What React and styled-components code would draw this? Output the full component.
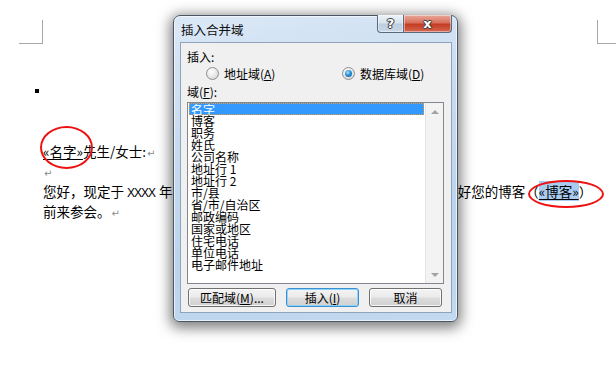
import React from "react"
import styled, {createGlobalStyle} from "styled-components"

const GlobalStyle = createGlobalStyle`
    html, body {
        margin: 0;
        padding: 0;
        background: #ffffff;
    }
    body {
        font-family: "Noto Sans CJK SC", "Liberation Sans", sans-serif;
        color: #000;
    }
`

const Page = styled.div`
    position: relative;
    width: 616px;
    height: 368px;
    overflow: hidden;
    background: #ffffff;
`
const CornerRow = styled.div`
    display: flex;
    justify-content: space-between;
    padding-top: 20px;
`
const Corner = styled.div`
    width: ${p => p.right ? "18px" : "23px"};
    height: 23px;
    margin-left: ${p => p.right ? "0px" : "19px"};
    border-bottom: 1px solid #a8a8a8;
    border-${p => p.right ? "left" : "right"}: 1px solid #a8a8a8;
`
const Body = styled.div`
    display: flex;
    flex-direction: column;
    padding-left: 43px;
    font-size: 13.5px;
    line-height: 20px;
`
const Bullet = styled.div`
    width: 4px;
    height: 4px;
    margin: 45px 0 48px -8px;
    background: #000;
`
const Line = styled.div`
    white-space: nowrap;
    height: 20px;
`
const Field = styled.span`
    text-decoration: underline;
    text-underline-offset: 2px;
    background: ${p => p.selected ? "#a9cdf2" : "transparent"};
`
const Latin = styled.span`
    font-family: "Liberation Sans", sans-serif;
    font-size: 12px;
    letter-spacing: -1px;
    margin-right: 1px;
`
const Mark = styled.span`
    font-family: "DejaVu Sans", sans-serif;
    font-size: 10px;
    color: #8a8a8a;
    margin-left: 1px;
`
const Ring = styled.div`
    position: absolute;
    left: ${p => p.x}px;
    top: ${p => p.y}px;
    width: ${p => p.w}px;
    height: ${p => p.h}px;
    box-sizing: border-box;
    border: 2px solid #ee1111;
    border-radius: 50%;
`

/* dialog window */
const Dialog = styled.div`
    position: absolute;
    left: 173px;
    top: 15px;
    width: 285px;
    height: 307px;
    box-sizing: border-box;
    display: flex;
    flex-direction: column;
    border: 1px solid #4b5563;
    border-radius: 7px 7px 6px 6px;
    background: linear-gradient(170deg, #dbe8f6 0%, #c7dbf0 35%, #bbd4ed 70%, #c2d9ef 100%);
    box-shadow: inset 0 0 0 1px rgba(255,255,255,0.65), 0 3px 13px 3px rgba(0,0,0,0.5);
    font-size: 12px;
    line-height: 13px;
`
const TitleBar = styled.div`
    display: flex;
    align-items: flex-start;
    height: 26px;
    padding: 0 5px 0 7px;
`
const Title = styled.div`
    flex: 1;
    padding-top: 7px;
    font-size: 12.5px;
    color: #111;
`
const CaptionButton = styled.div`
    display: flex;
    align-items: center;
    justify-content: center;
    width: ${p => p.close ? "48px" : "27px"};
    height: 18px;
    margin-top: -1px;
    box-sizing: border-box;
    border: 1px solid #5a6a7e;
    border-top: none;
    border-left: ${p => p.close ? "none" : "1px solid #5a6a7e"};
    border-radius: ${p => p.close ? "0 0 4px 0" : "0 0 0 4px"};
    background: ${p => p.close
        ? "linear-gradient(180deg, #e9a99b 0%, #d9715c 45%, #c43c24 55%, #d5674f 100%)"
        : "linear-gradient(180deg, #eef3f9 0%, #d7e2ee 45%, #bdcddf 55%, #c9d8e8 100%)"};
    box-shadow: inset 0 0 0 1px rgba(255,255,255,0.45);
    color: #fff;
    font-family: "DejaVu Sans", sans-serif;
    font-weight: bold;
    font-size: 13px;
    text-shadow: 0 0 1px #333, 0 0 1px #333, 1px 0 0 #444, -1px 0 0 #444, 0 1px 0 #444, 0 -1px 0 #444;
`
const Client = styled.div`
    flex: 1;
    margin: 0 5px 8px 6px;
    border: 1px solid #8ea4bd;
    background: #f0f0f0;
    padding: 7px 6px 0 6px;
    display: flex;
    flex-direction: column;
`
const Label = styled.div`
    height: 13px;
    margin-top: ${p => p.gap || 0}px;
`
const RadioRow = styled.div`
    display: grid;
    grid-template-columns: 136px 1fr;
    align-items: center;
    height: 20px;
    padding-left: 19px;
`
const RadioItem = styled.div`
    display: flex;
    align-items: center;
    gap: 5px;
`
const RadioDot = styled.span`
    position: relative;
    width: 11px;
    height: 11px;
    border-radius: 50%;
    border: 1px solid #8e8f8f;
    background: radial-gradient(circle at 40% 35%, #ffffff 0%, #e6e6e6 55%, #c9c9c9 100%);

    &::after {
        content: "";
        display: ${p => p.checked ? "block" : "none"};
        position: absolute;
        left: 2px;
        top: 2px;
        width: 7px;
        height: 7px;
        border-radius: 50%;
        background: radial-gradient(circle at 40% 35%, #a9e4ff 0%, #2d8fd7 45%, #0d4f8c 100%);
    }
`
const Mn = styled.u`
    text-underline-offset: 1px;
`
const List = styled.div`
    display: flex;
    height: 182px;
    margin-top: 4px;
    margin-right: 1px;
    box-sizing: border-box;
    border: 1px solid #828790;
    background: #ffffff;
`
const Items = styled.div`
    flex: 1;
`
const Item = styled.div`
    height: 12px;
    line-height: 12px;
    font-size: 12px;
    padding-left: 1px;
    margin: 0 1px;
    box-sizing: border-box;
    border: 1px dotted ${p => p.active ? "#e79a3c" : "transparent"};
    border-width: ${p => p.active ? "1px" : "0 1px"};
    background: ${p => p.active ? "#3399ff" : "transparent"};
    color: ${p => p.active ? "#ffffff" : "#000000"};
    white-space: nowrap;
`
const ScrollBar = styled.div`
    width: 17px;
    display: flex;
    flex-direction: column;
    justify-content: space-between;
    background: #f3f3f3;
    border-left: 1px solid #e4e4e4;
`
const Arrow = styled.div`
    height: 17px;
    display: flex;
    align-items: center;
    justify-content: center;

    &::before {
        content: "";
        border-left: 4px solid transparent;
        border-right: 4px solid transparent;
        ${p => p.down ? "border-top" : "border-bottom"}: 4px solid #a3a3a3;
    }
`
const ButtonRow = styled.div`
    display: grid;
    grid-template-columns: 88px 73px 73px;
    column-gap: 10px;
    margin-top: 4px;
    padding-left: 1px;
`
const Button = styled.div`
    height: 19px;
    box-sizing: border-box;
    display: flex;
    align-items: center;
    justify-content: center;
    border: 1px solid ${p => p.primary ? "#3c8fd0" : "#707070"};
    border-radius: 3px;
    background: linear-gradient(180deg, #f3f3f3 0%, #ebebeb 48%, #dddddd 52%, #d0d0d0 100%);
    box-shadow: inset 0 0 0 1px ${p => p.primary ? "#8fd4fb" : "rgba(255,255,255,0.8)"};
    font-size: 12px;
`

const fields = [
    "名字", "博客", "职务", "姓氏", "公司名称", "地址行 1", "地址行 2",
    "市/县", "省/市/自治区", "邮政编码", "国家或地区", "住宅电话", "单位电话", "电子邮件地址",
]

const App = () =>
    <Page>
        <GlobalStyle />
        <CornerRow>
            <Corner />
            <Corner right />
        </CornerRow>
        <Body>
            <Bullet />
            <Line>
                <Field>«名字»</Field>先生/女士:<Mark>↵</Mark>
            </Line>
            <Line><Mark>↵</Mark></Line>
            <Line>
                您好，现定于 <Latin>XXXX</Latin> 年 <Latin>XX</Latin> 月 <Latin>XX</Latin> 日举办博客交流年会，我们一直非常看好您的博客（<Field selected>«博客»</Field>）
            </Line>
            <Line>
                前来参会。<Mark>↵</Mark>
            </Line>
        </Body>
        <Ring x={40} y={126} w={53} h={43} />
        <Ring x={528} y={180} w={76} h={28} />

        <Dialog>
            <TitleBar>
                <Title>插入合并域</Title>
                <CaptionButton>?</CaptionButton>
                <CaptionButton close>x</CaptionButton>
            </TitleBar>
            <Client>
                <Label>插入:</Label>
                <RadioRow>
                    <RadioItem>
                        <RadioDot />
                        <span>地址域(<Mn>A</Mn>)</span>
                    </RadioItem>
                    <RadioItem>
                        <RadioDot checked />
                        <span>数据库域(<Mn>D</Mn>)</span>
                    </RadioItem>
                </RadioRow>
                <Label gap={2}>域(<Mn>F</Mn>):</Label>
                <List>
                    <Items>
                        {fields.map((name, i) =>
                            <Item key={name} active={i === 0}>{name}</Item>
                        )}
                    </Items>
                    <ScrollBar>
                        <Arrow />
                        <Arrow down />
                    </ScrollBar>
                </List>
                <ButtonRow>
                    <Button>匹配域(<Mn>M</Mn>)...</Button>
                    <Button primary>插入(<Mn>I</Mn>)</Button>
                    <Button>取消</Button>
                </ButtonRow>
            </Client>
        </Dialog>
    </Page>

export default App
